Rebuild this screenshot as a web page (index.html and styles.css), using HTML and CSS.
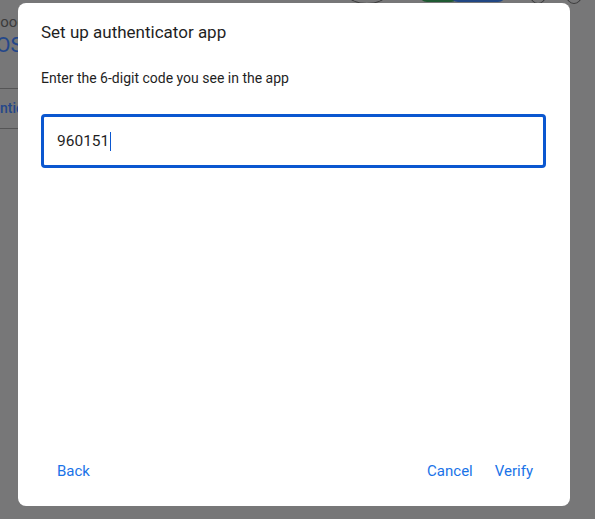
FILE: index.html
```html
<!DOCTYPE html>
<html lang="en">
<head>
  <meta charset="UTF-8">
  <title>Set up authenticator app</title>
  <link rel="stylesheet" href="styles.css">
</head>
<body>
  <div class='page'>
    <div class='page-side'>
      <div class='side-label'>Google</div>
      <div class='side-os'>iOS</div>
      <div class='side-row'>Authenticator</div>
    </div>
    <div class='page-art'>
      <span class='arc arc-a'></span>
      <span class='blob blob-green'></span>
      <span class='blob blob-blue'></span>
      <span class='arc arc-b'></span>
      <span class='arc arc-c'></span>
    </div>
  </div>

  <div class='dialog'>
    <h2 class='dialog-title'>Set up authenticator app</h2>
    <p class='dialog-text'>Enter the 6-digit code you see in the app</p>
    <div class='code-field'>
      <span class='code-value'>960151</span><span class='caret'></span>
    </div>
    <div class='dialog-actions'>
      <button class='text-btn'>Back</button>
      <div class='actions-right'>
        <button class='text-btn'>Cancel</button>
        <button class='text-btn'>Verify</button>
      </div>
    </div>
  </div>
</body>
</html>
```
FILE: styles.css
```css
body { margin: 0; background-color: #777778; font-family: Roboto, "Liberation Sans", sans-serif; width: 595px; height: 519px; overflow: hidden; position: relative; }
.page { height: 100%; }
.page-side { width: 40px; padding-top: 12px; overflow: hidden; }
.side-label { color: #3b3b3c; font-size: 15px; line-height: 20px; text-indent: -10px; }
.side-os { color: #24478a; font-size: 21px; line-height: 24px; margin-top: 1px; text-indent: -9px; }
.side-row { color: #24478a; font-size: 14px; font-weight: 500; line-height: 20px; border-top: 1px solid #555556; border-bottom: 1px solid #555556; padding: 9px 0 10px; margin-top: 31px; text-indent: -37px; white-space: nowrap; }
.page-art span { position: absolute; }
.arc { top: -14px; width: 16px; height: 16px; border: 1px solid #3b3b3c; border-radius: 50%; }
.arc-a { left: 348px; width: 36px; }
.arc-b { left: 530px; width: 14px; }
.arc-c { left: 566px; width: 14px; }
.blob { top: -14px; height: 16px; border-radius: 8px; }
.blob-green { left: 419px; width: 40px; background-color: #1f5a33; }
.blob-blue { left: 450px; width: 56px; background-color: #214783; }

.dialog { position: absolute; left: 18px; top: 3px; width: 552px; height: 503px; background-color: #fff; border-radius: 8px; box-sizing: border-box; padding: 19px 26px 20px 23px; display: flex; flex-direction: column; }
.dialog-title { margin: 0; font-size: 17px; font-weight: 400; color: #1f1f1f; line-height: 20px; }
.dialog-text { margin: 27px 0 0; font-size: 14px; color: #1f1f1f; line-height: 18px; }
.code-field { margin-top: 27px; margin-right: -2px; height: 54px; border: 3px solid #0b57d0; border-radius: 4px; box-sizing: border-box; display: flex; align-items: center; padding-left: 13px; }
.code-value { font-size: 15.5px; color: #1f1f1f; }
.caret { width: 1px; height: 19px; background-color: #0b57d0; margin-left: 1px; }
.dialog-actions { margin-top: auto; margin-left: 5px; display: flex; justify-content: space-between; align-items: center; }
.actions-right { display: flex; gap: 0; }
.text-btn { background: none; border: none; color: #1a73e8; font-family: Roboto, "Liberation Sans", sans-serif; font-size: 15px; font-weight: 400; padding: 6px 11px; cursor: pointer; }
```
